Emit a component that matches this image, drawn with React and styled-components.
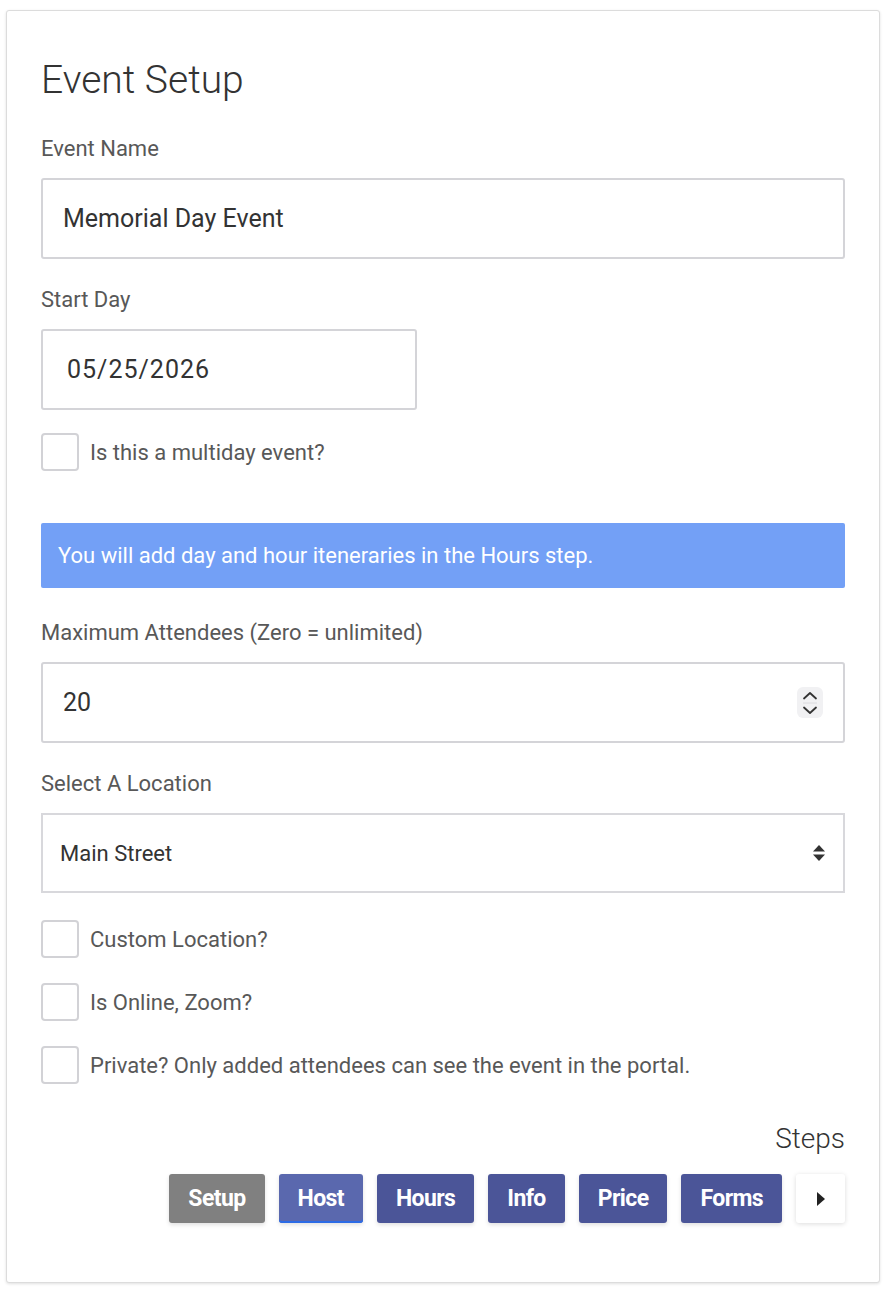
import React from 'react';
import styled, { createGlobalStyle } from 'styled-components';

const GlobalStyle = createGlobalStyle`
  html, body {
    margin: 0;
    padding: 0;
    background: #ffffff;
  }
  body {
    font-family: Roboto, "Noto Sans", Arial, sans-serif;
  }
  * { box-sizing: border-box; }
`;

const steps = [
  { name: 'Setup', kind: 'done' },
  { name: 'Host', kind: 'active' },
  { name: 'Hours', kind: 'todo' },
  { name: 'Info', kind: 'todo' },
  { name: 'Price', kind: 'todo' },
  { name: 'Forms', kind: 'todo' },
];

const stepColors = {
  done: '#808080',
  active: '#5a68ae',
  todo: '#4b5598',
};

const Card = styled.div`
  margin: 10px 10px 9px 6px;
  width: 874px;
  border: 1px solid #dcdcdc;
  border-radius: 3px;
  box-shadow: 0 1px 3px rgba(0, 0, 0, 0.12);
  background: #fff;
  padding: 47px 34px 59px 34px;
  display: flex;
  flex-direction: column;
`;

const Title = styled.h1`
  margin: 0 0 31px 0;
  font-size: 39px;
  line-height: 45px;
  font-weight: 300;
  color: #333;
`;

const Group = styled.div`
  display: flex;
  flex-direction: column;
  margin-bottom: ${(p) => p.$mb ?? 26}px;
`;

const Label = styled.label`
  font-size: 22px;
  line-height: 30px;
  color: #585858;
  margin-bottom: 14px;
`;

const FieldWrap = styled.div`
  position: relative;
  width: ${(p) => p.$width || '100%'};
`;

const TextInput = styled.input`
  display: block;
  width: 100%;
  height: 81px;
  border: 2px solid #d4d4d8;
  border-radius: 3px;
  padding: 0 20px;
  font-family: Roboto, Arial, sans-serif;
  font-size: 25px;
  color: #333;
  letter-spacing: ${(p) => p.$spaced ? '1px' : 'normal'};
  background: #fff;
  outline: none;
  padding-left: ${(p) => p.$pl || 20}px;
`;

const Spinner = styled.div`
  position: absolute;
  right: 22px;
  top: 25px;
  width: 26px;
  height: 31px;
  border-radius: 6px;
  background: #f1f1f3;
  display: flex;
  align-items: center;
  justify-content: center;
`;

const Select = styled.select`
  display: block;
  width: 100%;
  height: 80px;
  border: 2px solid #d8d8dc;
  border-radius: 0;
  padding: 0 17px;
  font-family: Roboto, Arial, sans-serif;
  font-size: 22px;
  color: #333;
  background: #fff;
  appearance: none;
  -webkit-appearance: none;
  outline: none;
`;

const SelectArrows = styled.div`
  position: absolute;
  right: 19px;
  top: 31px;
  pointer-events: none;
  display: flex;
`;

const CheckRow = styled.label`
  display: flex;
  align-items: center;
  gap: 11px;
  margin-top: ${(p) => p.$mt ?? 25}px;
  font-size: 22px;
  color: #585858;
`;

const Box = styled.span`
  width: 38px;
  height: 38px;
  border: 2px solid #d2d2d6;
  border-radius: 4px;
  background: #fff;
  flex-shrink: 0;
`;

const Banner = styled.div`
  margin-top: 52px;
  margin-bottom: 30px;
  height: 65px;
  background: #73a0f6;
  border-radius: 2px;
  color: #fff;
  font-size: 22px;
  display: flex;
  align-items: center;
  padding-left: 17px;
`;

const StepsTitle = styled.div`
  margin-top: 38px;
  margin-bottom: 18px;
  text-align: right;
  font-size: 28px;
  line-height: 34px;
  font-weight: 300;
  color: #333;
`;

const StepBar = styled.div`
  display: flex;
  justify-content: flex-end;
  gap: 14px;
`;

const StepButton = styled.button`
  height: 49px;
  padding: 0 19px;
  border: none;
  border-radius: 3px;
  background: ${(p) => stepColors[p.$kind]};
  color: #fff;
  font-family: Roboto, Arial, sans-serif;
  font-size: 23px;
  font-weight: 700;
  letter-spacing: -0.6px;
  box-shadow: ${(p) => p.$kind === 'active'
    ? 'inset 0 -2px 0 #2c6be6, 0 2px 4px rgba(0, 0, 0, 0.12)'
    : '0 2px 4px rgba(0, 0, 0, 0.12)'};
  cursor: pointer;
`;

const NextButton = styled.button`
  width: 49px;
  height: 49px;
  border: none;
  border-radius: 3px;
  background: #fff;
  box-shadow: 0 1px 5px rgba(0, 0, 0, 0.14);
  display: flex;
  align-items: center;
  justify-content: center;
  cursor: pointer;
`;

const Checkbox = ({ label, mt }) => (
  <CheckRow $mt={mt}>
    <Box />
    {label}
  </CheckRow>
);

export default function App() {
  return (
    <>
      <GlobalStyle />
      <Card>
        <Title>Event Setup</Title>

        <Group>
          <Label>Event Name</Label>
          <TextInput readOnly defaultValue="Memorial Day Event" />
        </Group>

        <Group $mb={0}>
          <Label>Start Day</Label>
          <FieldWrap $width="376px">
            <TextInput readOnly defaultValue="05/25/2026" $spaced $pl={24} />
          </FieldWrap>
        </Group>

        <Checkbox label="Is this a multiday event?" mt={23} />

        <Banner>You will add day and hour iteneraries in the Hours step.</Banner>

        <Group>
          <Label>Maximum Attendees (Zero = unlimited)</Label>
          <FieldWrap>
            <TextInput readOnly defaultValue="20" />
            <Spinner>
              <svg width="18" height="26" viewBox="0 0 18 26">
                <path d="M3 8.5 L9 3 L15 8.5" fill="none" stroke="#333" strokeWidth="1.8" strokeLinecap="round" strokeLinejoin="round" />
                <line x1="2" y1="13" x2="16" y2="13" stroke="#dadade" strokeWidth="1" />
                <path d="M3 17.5 L9 23 L15 17.5" fill="none" stroke="#333" strokeWidth="1.8" strokeLinecap="round" strokeLinejoin="round" />
              </svg>
            </Spinner>
          </FieldWrap>
        </Group>

        <Group $mb={0}>
          <Label>Select A Location</Label>
          <FieldWrap>
            <Select defaultValue="main">
              <option value="main">Main Street</option>
            </Select>
            <SelectArrows>
              <svg width="14" height="18" viewBox="0 0 14 18">
                <path d="M1 7.5 L7 1 L13 7.5 Z" fill="#333" />
                <path d="M1 10.5 L7 17 L13 10.5 Z" fill="#333" />
              </svg>
            </SelectArrows>
          </FieldWrap>
        </Group>

        <Checkbox label="Custom Location?" mt={27} />
        <Checkbox label="Is Online, Zoom?" />
        <Checkbox label="Private? Only added attendees can see the event in the portal." />

        <StepsTitle>Steps</StepsTitle>
        <StepBar>
          {steps.map((s) => (
            <StepButton key={s.name} $kind={s.kind}>{s.name}</StepButton>
          ))}
          <NextButton aria-label="next">
            <svg width="10" height="16" viewBox="0 0 10 16">
              <path d="M1 1 L9 8 L1 15 Z" fill="#222" />
            </svg>
          </NextButton>
        </StepBar>
      </Card>
    </>
  );
}
